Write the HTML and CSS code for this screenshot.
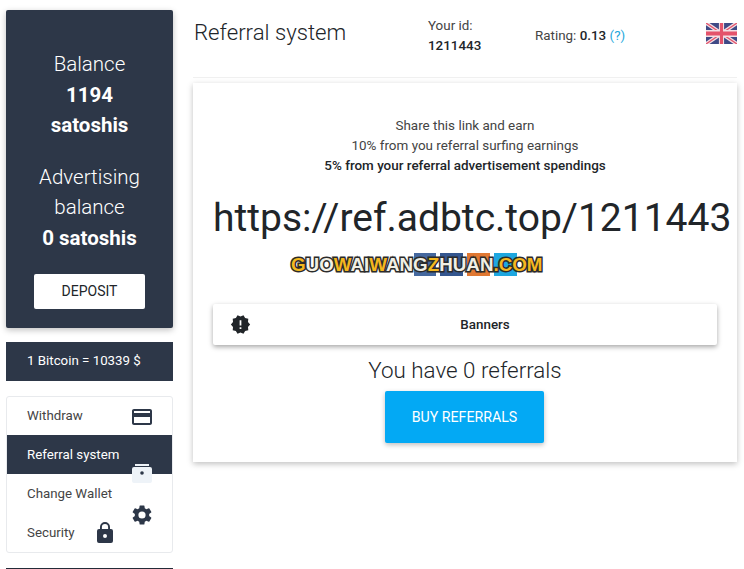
FILE: index.html
```html
<!DOCTYPE html>
<html lang="en">
<head>
    <meta charset="UTF-8">
    <title>Referral system</title>
    <link rel="stylesheet" href="styles.css">
</head>
<body>
    <div class="page">

        <!-- left column -->
        <div class="side">
            <div class="balance">
                <div class="bal_label">Balance</div>
                <div class="bal_value">1194<br>satoshis</div>
                <div class="bal_label bal_second">Advertising<br>balance</div>
                <div class="bal_value">0 satoshis</div>
                <a class="deposit">DEPOSIT</a>
            </div>

            <div class="rate">1 Bitcoin = 10339 $</div>

            <div class="menu">
                <div class="menu_row">
                    <span>Withdraw</span>
                    <svg class="menu_icon" viewBox="0 0 24 24"><path d="M20 4H4c-1.11 0-2 .89-2 2v12c0 1.11.89 2 2 2h16c1.11 0 2-.89 2-2V6c0-1.11-.89-2-2-2zm0 14H4v-6h16v6zm0-10H4V6h16v2z"/></svg>
                </div>
                <div class="menu_row menu_active">
                    <span>Referral system</span>
                    <svg class="wallet_icon" viewBox="0 0 24 24"><path d="M5 2h14v2H5zM4 5h16a2 2 0 0 1 2 2v12a2 2 0 0 1-2 2H4a2 2 0 0 1-2-2V7a2 2 0 0 1 2-2z"/><circle cx="12" cy="11" r="1.8" fill="#2d3748"/></svg>
                </div>
                <div class="menu_row">
                    <span>Change Wallet</span>
                    <svg class="gear_icon" viewBox="0 0 24 24"><path d="M19.14 12.94c.04-.3.06-.61.06-.94s-.02-.64-.07-.94l2.03-1.58a.49.49 0 0 0 .12-.61l-1.92-3.32a.49.49 0 0 0-.59-.22l-2.39.96a7 7 0 0 0-1.62-.94l-.36-2.54a.48.48 0 0 0-.48-.41h-3.84a.47.47 0 0 0-.47.41l-.36 2.54c-.59.24-1.13.57-1.62.94l-2.39-.96a.48.48 0 0 0-.59.22L2.74 8.87a.47.47 0 0 0 .12.61l2.03 1.58c-.05.3-.09.63-.09.94s.02.64.07.94l-2.03 1.58a.49.49 0 0 0-.12.61l1.92 3.32c.12.22.37.29.59.22l2.39-.96c.5.38 1.03.7 1.62.94l.36 2.54c.05.24.24.41.48.41h3.84c.24 0 .44-.17.47-.41l.36-2.54a7 7 0 0 0 1.62-.94l2.39.96c.22.08.47 0 .59-.22l1.92-3.32a.47.47 0 0 0-.12-.61l-2.01-1.58zM12 15.6a3.6 3.6 0 1 1 0-7.2 3.6 3.6 0 0 1 0 7.2z"/></svg>
                </div>
                <div class="menu_row">
                    <span>Security</span>
                    <svg class="lock_icon" viewBox="0 0 24 24"><path d="M18 8h-1V6A5 5 0 0 0 7 6v2H6a2 2 0 0 0-2 2v10a2 2 0 0 0 2 2h12a2 2 0 0 0 2-2V10a2 2 0 0 0-2-2zm-6 9a2 2 0 1 1 0-4 2 2 0 0 1 0 4zm3.1-9H8.9V6a3.1 3.1 0 0 1 6.2 0v2z"/></svg>
                </div>
            </div>

            <div class="side_next"></div>
        </div>

        <!-- right column -->
        <div class="content">
            <div class="top">
                <h1 class="title">Referral system</h1>
                <div class="your_id">Your id:<br><b>1211443</b></div>
                <div class="rating">Rating: <b>0.13</b> <a class="help">(?)</a></div>
                <svg class="flag" viewBox="0 0 60 30" preserveAspectRatio="none">
                    <rect width="60" height="30" fill="#3f4a86"/>
                    <path d="M0 0L60 30M60 0L0 30" stroke="#f3dfe4" stroke-width="6"/>
                    <path d="M0 0L60 30M60 0L0 30" stroke="#e4536b" stroke-width="2"/>
                    <path d="M30 0V30M0 15H60" stroke="#f3dfe4" stroke-width="10"/>
                    <path d="M30 0V30M0 15H60" stroke="#e4536b" stroke-width="6"/>
                </svg>
            </div>

            <div class="card">
                <p class="share">Share this link and earn<br>10% from you referral surfing earnings<br><b>5% from your referral advertisement spendings</b></p>
                <div class="ref_link">https://ref.adbtc.top/1211443</div>
                <div class="mark">
                    <i class="mark_blue m1"></i><i class="mark_blue m2"></i><i class="mark_orange"></i><i class="mark_sky"></i>
                    <span class="mark_text"><em>G</em>UO<em>W</em>AI<em>W</em>ANG<em>Z</em>HUAN<em>.COM</em></span>
                </div>
                <div class="banners">
                    <svg class="badge" viewBox="0 0 24 24"><path d="M23 12l-2.44-2.79.34-3.69-3.61-.82-1.89-3.2L12 2.96 8.6 1.5 6.71 4.69 3.1 5.5l.34 3.7L1 12l2.44 2.79-.34 3.7 3.61.82L8.6 22.5l3.4-1.47 3.4 1.46 1.89-3.19 3.61-.82-.34-3.69L23 12zm-10 5h-2v-2h2v2zm0-4h-2V7h2v6z"/></svg>
                    <span>Banners</span>
                </div>
                <div class="ref_count">You have 0 referrals</div>
                <a class="buy">BUY REFERRALS</a>
            </div>
        </div>

    </div>
</body>
</html>
```

FILE: styles.css
```css
* {
    box-sizing: border-box;
}

html, body {
    height: 100%;
}

body {
    margin: 0;
    overflow: hidden;
    background-color: #fff;
    color: #212529;
    font-family: Roboto, "Liberation Sans", sans-serif;
}

.page {
    display: flex;
    align-items: flex-start;
}

/* left column */
.side {
    width: 167px;
    margin-left: 6px;
    margin-top: 10px;
    flex-shrink: 0;
}

.balance {
    height: 318px;
    padding-top: 39px;
    background-color: #2d3748;
    border-radius: 2px;
    box-shadow: 0 2px 6px rgba(0, 0, 0, .25);
    color: #fff;
    text-align: center;
    font-size: 20.5px;
    line-height: 30.5px;
}

.bal_label {
    font-weight: 300;
}

.bal_second {
    margin-top: 21px;
}

.bal_value {
    font-weight: 700;
}

.deposit {
    display: block;
    width: 111px;
    height: 35px;
    margin: 21px auto 0;
    background-color: #fff;
    border-radius: 2px;
    color: #212529;
    font-size: 14px;
    line-height: 35px;
}

.rate {
    height: 39px;
    margin-top: 14px;
    padding-left: 21px;
    background-color: #2d3748;
    color: #fff;
    font-size: 13.3px;
    line-height: 38px;
}

.menu {
    margin-top: 15px;
    height: 157px;
    border: 1px solid #e8eaed;
    border-radius: 3px;
}

.menu_row {
    position: relative;
    height: 39px;
    padding-left: 20px;
    color: #444;
    font-size: 13.3px;
    line-height: 39px;
}

.menu_row:first-child {
    height: 38px;
    line-height: 37px;
}

.menu_active {
    background-color: #2d3748;
    color: #fff;
}

.menu_icon, .gear_icon, .lock_icon, .wallet_icon {
    position: absolute;
    fill: #2d3748;
    width: 24px;
    height: 24px;
}

.menu_icon {
    right: 18px;
    top: 8px;
}

.wallet_icon {
    right: 18px;
    top: 27px;
    fill: #eef3f8;
}

.gear_icon {
    right: 18px;
    top: 29px;
}

.lock_icon {
    left: 86px;
    top: 8px;
}

.side_next {
    height: 12px;
    margin-top: 15px;
    background-color: #232b38;
}

/* right column */
.content {
    width: 544px;
    margin-left: 20px;
}

.top {
    position: relative;
    display: flex;
    height: 78px;
    border-bottom: 1px solid #f0f0f0;
}

.title {
    width: 234px;
    margin: 16px 0 0 1px;
    font-size: 22.2px;
    line-height: 32px;
    font-weight: 300;
}

.your_id {
    width: 107px;
    margin-top: 16px;
    font-size: 13.4px;
    line-height: 20px;
    color: #444;
}

.your_id b {
    color: #212529;
    font-weight: 500;
}

.rating {
    margin-top: 26px;
    font-size: 13.4px;
    line-height: 20px;
    color: #444;
}

.rating b {
    color: #212529;
    font-weight: 500;
}

.help {
    color: #1fa8dc;
}

.flag {
    position: absolute;
    right: 0;
    top: 23px;
    width: 31px;
    height: 21px;
}

.card {
    height: 379px;
    margin-top: 5px;
    padding-top: 33px;
    text-align: center;
    background-color: #fff;
    box-shadow: 0 2px 6px rgba(0, 0, 0, .25);
}

.share {
    margin: 0;
    font-size: 13.44px;
    line-height: 20px;
    color: #444;
}

.share b {
    color: #212529;
    font-weight: 500;
}

.ref_link {
    margin-top: 17px;
    padding-left: 20px;
    font-size: 39px;
    line-height: 50px;
    font-weight: 400;
    white-space: nowrap;
    text-align: left;
    color: #212529;
}

.mark {
    position: relative;
    height: 24px;
    margin-top: 10px;
    margin-left: 98px;
    text-align: left;
}

.mark i {
    position: absolute;
    top: 0;
    height: 23px;
}

.m1 { left: 123px; width: 22px; background-color: #45689e; }
.m2 { left: 149px; width: 23px; background-color: #34568f; }
.mark_orange { left: 176px; width: 23px; background-color: #e07832; }
.mark_sky { left: 203px; width: 23px; background-color: #1ea7e0; }

.mark_text {
    position: relative;
    font-family: "Liberation Sans", sans-serif;
    font-size: 18.8px;
    line-height: 24px;
    font-weight: 700;
    color: #f1efe4;
    -webkit-text-stroke: 3px #2b2b2b;
    paint-order: stroke fill;
}

.mark_text em {
    font-style: normal;
    color: #f4b81e;
}

.banners {
    position: relative;
    height: 41px;
    margin: 27px 20px 0;
    padding-left: 40px;
    background-color: #fff;
    border-radius: 2px;
    box-shadow: 0 2px 5px rgba(0, 0, 0, .35);
    font-size: 13.4px;
    font-weight: 500;
    line-height: 41px;
}

.badge {
    position: absolute;
    left: 17px;
    top: 10px;
    width: 21px;
    height: 21px;
    fill: #212529;
}

.ref_count {
    margin-top: 9px;
    font-size: 22.4px;
    line-height: 32px;
    font-weight: 300;
}

.buy {
    display: block;
    width: 159px;
    height: 52px;
    margin: 5px 0 0 192px;
    background-color: #03a9f4;
    border-radius: 2px;
    box-shadow: 0 2px 5px rgba(0, 0, 0, .25);
    color: #fff;
    font-size: 14.2px;
    font-weight: 400;
    line-height: 52px;
}
```
